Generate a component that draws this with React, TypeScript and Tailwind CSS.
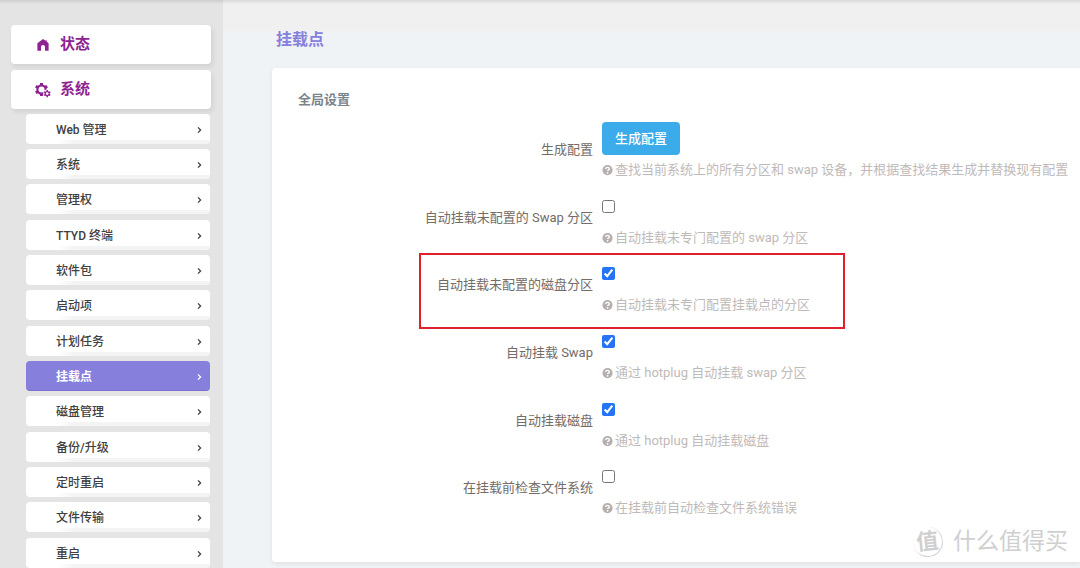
import { useState } from "react";

const MENU = [
    "Web 管理",
    "系统",
    "管理权",
    "TTYD 终端",
    "软件包",
    "启动项",
    "计划任务",
    "挂载点",
    "磁盘管理",
    "备份/升级",
    "定时重启",
    "文件传输",
    "重启",
];

type Option = {
    id: string;
    label: string;
    help: string;
    checked: boolean;
    highlighted?: boolean;
};

const OPTIONS: Option[] = [
    { id: "anon_swap", label: "自动挂载未配置的 Swap 分区", help: "自动挂载未专门配置的 swap 分区", checked: false },
    { id: "anon_mount", label: "自动挂载未配置的磁盘分区", help: "自动挂载未专门配置挂载点的分区", checked: true, highlighted: true },
    { id: "auto_swap", label: "自动挂载 Swap", help: "通过 hotplug 自动挂载 swap 分区", checked: true },
    { id: "auto_mount", label: "自动挂载磁盘", help: "通过 hotplug 自动挂载磁盘", checked: true },
    { id: "check_fs", label: "在挂载前检查文件系统", help: "在挂载前自动检查文件系统错误", checked: false },
];

function HomeIcon() {
    return (
        <svg viewBox="0 0 12 12" className="w-3 h-3" fill="currentColor" aria-hidden="true">
            <path d="M6 0 8.3 1.6H9.8V2.7L11.6 4.2V11.8H8V8a2 2 0 0 0-4 0V11.8H.4V4.2Z" />
        </svg>
    );
}

function GearsIcon() {
    return (
        <svg viewBox="0 0 16 16" className="w-4 h-4" fill="none" stroke="currentColor" aria-hidden="true">
            <circle cx="6.5" cy="7.5" r="4.1" strokeWidth="2.2" />
            <path
                strokeWidth="3"
                d="M6.5 3.4V.9M3 5.5.8 4.2M3 9.5.8 10.8M6.5 11.6v2.5M10 5.5l2.2-1.3"
            />
            <circle cx="12.2" cy="11.6" r="4" fill="#fff" stroke="none" />
            <circle cx="12.2" cy="11.6" r="2" strokeWidth="1.2" />
            <path
                strokeWidth="1.5"
                d="M12.2 9.6V8M10.5 10.6l-1.4-.8M10.5 12.6l-1.4.8M12.2 13.6v1.6M13.9 12.6l1.4.8M13.9 10.6l1.4-.8"
            />
        </svg>
    );
}

function Chevron() {
    return (
        <svg viewBox="0 0 5 8" className="w-[5px] h-2" fill="none" stroke="currentColor" strokeWidth="1.3" aria-hidden="true">
            <path d="m1 1.4 2.6 2.6L1 6.6" />
        </svg>
    );
}

function HelpText({ children }: { children: string }) {
    return (
        <p className="mt-[5px] flex items-center gap-0.5 text-[13px] leading-5 text-[#bfbab9] whitespace-nowrap">
            <svg viewBox="0 0 16 16" className="w-[11px] h-[11px] shrink-0" aria-hidden="true">
                <circle cx="8" cy="7.4" r="7.4" fill="#b5afae" />
                <path d="M5.4 5.8c.1-3.2 5.3-3.1 5.2-.1 0 1.8-2.5 1.6-2.5 3.2" fill="none" stroke="#fff" strokeWidth="2" />
                <circle cx="8.1" cy="11.3" r="1.3" fill="#fff" />
            </svg>
            {children}
        </p>
    );
}

const rowClass = "relative flex items-start gap-[9px] pb-2.5 [&:nth-child(3n+2)]:pb-[9px]";
const labelClass = "w-[295px] shrink-0 pt-[18px] text-right text-[13px] leading-5 text-[#736c67]";

export default function App() {
    const [options, setOptions] = useState(OPTIONS);

    function toggle(id: string) {
        setOptions(prev => prev.map(o => (o.id === id ? { ...o, checked: !o.checked } : o)));
    }

    return (
        <div className="relative flex min-h-screen overflow-hidden bg-[#eff3f5] font-[Roboto,'Noto_Sans_CJK_SC',sans-serif]">
            <div className="absolute inset-x-0 top-0 h-1 bg-linear-to-b from-black/10 to-transparent" />

            <aside className="w-[223px] shrink-0 bg-[#e4e4e4] pl-[11px] pr-3 pt-[25px]">
                <nav>
                    <a href="#status" className="flex h-[39px] items-center rounded bg-white pl-[26px] text-[15px] font-bold text-[#8e2290] shadow-[2px_3px_5px_rgba(0,0,0,0.08)]">
                        <span className="w-[23px]"><HomeIcon /></span>
                        状态
                    </a>
                    <a href="#system" className="mt-1.5 flex h-[39px] items-center rounded bg-white pl-6 text-[15px] font-bold text-[#8e2290] shadow-[2px_3px_5px_rgba(0,0,0,0.08)]">
                        <span className="w-[25px]"><GearsIcon /></span>
                        系统
                    </a>
                    <ul className="ml-[15px] mr-px mt-[5px]">
                        {MENU.map(name => (
                            <li key={name} className="mb-[5px] [&:nth-child(3n)]:mb-1.5 last:mb-0">
                                {name === "挂载点" ? (
                                    <a href="#mounts" aria-current="page" className="flex h-[30px] items-center justify-between rounded border-b border-[#7a71cf] bg-[#8680dc] pl-[30px] pr-2 pt-0.5 text-xs font-bold text-white">
                                        {name}
                                        <Chevron />
                                    </a>
                                ) : (
                                    <a href={`#${name}`} className="relative flex h-[30px] items-center justify-between overflow-hidden rounded bg-white pl-[30px] pr-2 pt-px text-xs font-medium text-[#404040] after:absolute after:bottom-0 after:left-8 after:right-0 after:h-1 after:bg-linear-to-r after:from-white after:to-[#f4f4f4] after:to-10%">
                                        {name}
                                        <Chevron />
                                    </a>
                                )}
                            </li>
                        ))}
                    </ul>
                </nav>
            </aside>

            <main className="min-w-0 flex-1 bg-[linear-gradient(#f0f0f0_31px,transparent_31px)] pl-[49px] pt-7">
                <h2 className="mb-4 pl-1 text-base leading-6 font-bold text-[#8680dc]">挂载点</h2>

                <section className="rounded-l bg-white pl-[26px] pt-[22px] pb-[34px] shadow-[0_2px_5px_rgba(0,0,0,0.07)]">
                    <h3 className="mb-3 text-[13px] leading-5 font-bold text-[#7b848c]">全局设置</h3>

                    <div>
                        <div className={rowClass}>
                            <label htmlFor="generate" className={labelClass}>生成配置</label>
                            <div>
                                <button id="generate" type="button" className="block h-[33px] rounded bg-[#3babe9] px-[13px] text-[13px] font-medium text-white">
                                    生成配置
                                </button>
                                <HelpText>查找当前系统上的所有分区和 swap 设备，并根据查找结果生成并替换现有配置</HelpText>
                            </div>
                        </div>

                        {options.map(option => (
                            <div key={option.id} className={rowClass}>
                                <label htmlFor={option.id} className={labelClass}>{option.label}</label>
                                <div>
                                    <div className="flex h-[33px] items-center">
                                        <input
                                            id={option.id}
                                            type="checkbox"
                                            checked={option.checked}
                                            onChange={() => toggle(option.id)}
                                            className="w-[13px] h-[13px] accent-[#2673f5]"
                                        />
                                    </div>
                                    <HelpText>{option.help}</HelpText>
                                </div>
                                {option.highlighted && (
                                    <div className="pointer-events-none absolute left-[121px] -top-1 h-[76px] w-[426px] border-2 border-[#e0202a]" />
                                )}
                            </div>
                        ))}
                    </div>
                </section>
            </main>

            <div className="pointer-events-none absolute bottom-2.5 right-3 flex items-center gap-2.5 text-[#cfcfcf]">
                <span className="flex h-[30px] w-[30px] -rotate-6 items-center justify-center rounded-full border-r border-b border-[#d4d4d4] text-[22px] leading-none font-bold">值</span>
                <span className="text-[23px] leading-8">什么值得买</span>
            </div>
        </div>
    );
}
